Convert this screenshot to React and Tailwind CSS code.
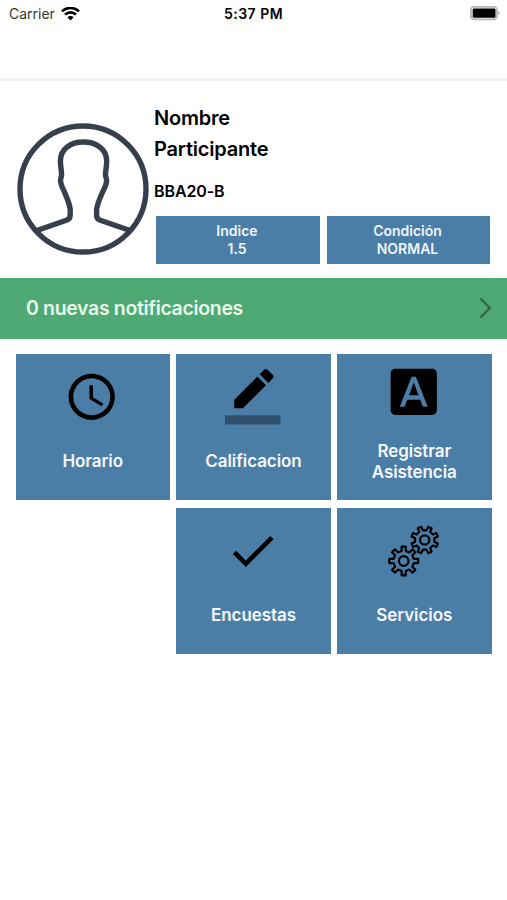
import React from "react";

function gearPath(cx, cy, outer, root, offset) {
  const teeth = 8;
  const step = 360 / teeth;
  const points = [];
  for (let i = 0; i < teeth; i++) {
    const mid = offset + i * step;
    [
      [-11.5, root],
      [-8, outer],
      [8, outer],
      [11.5, root],
    ].forEach(([delta, radius]) => {
      const a = ((mid + delta) * Math.PI) / 180;
      points.push(`${(cx + radius * Math.cos(a)).toFixed(2)} ${(cy + radius * Math.sin(a)).toFixed(2)}`);
    });
  }
  return `M${points.join("L")}Z`;
}

function StatusBar() {
  return (
    <div className="grid h-[28px] grid-cols-3 items-center pl-[9px] pr-[6px]">
      <div className="flex items-center gap-[6px]">
        <span className="text-[14px] leading-[18px] text-[#333]">Carrier</span>
        <svg className="h-[15px] w-[19px]" viewBox="0 0 19 15">
          <g fill="none" stroke="#000" strokeWidth="2.7">
            <path d="M1 4.4A12.2 12.2 0 0 1 18 4.4" />
            <path d="M4 7.6A7.9 7.9 0 0 1 15 7.6" />
          </g>
          <path d="M9.5 13.4L6.4 10.3A4.4 4.4 0 0 1 12.6 10.3Z" />
        </svg>
      </div>
      <span className="-ml-[3px] text-center text-[14px] font-semibold leading-[18px] tracking-[0.5px]">5:37 PM</span>
      <svg className="h-[16px] w-[32px] justify-self-end" viewBox="0 0 32 16">
        <rect x="1.9" y="0.8" width="26" height="12.6" rx="3.4" fill="#fff" stroke="#b5b5b5" strokeWidth="1.9" />
        <rect x="3.7" y="2.6" width="22.8" height="9.2" rx="1.4" />
        <path d="M29.4 4.7a2.6 2.6 0 0 1 0 4.6Z" fill="#aaa" />
      </svg>
    </div>
  );
}

function Avatar() {
  return (
    <svg className="h-[132px] w-[132px] shrink-0" viewBox="0 0 132 132" fill="none" stroke="#373f4d" strokeWidth="5.4">
      <circle cx="66" cy="66" r="63" />
      <path
        strokeLinejoin="round"
        d="M20 107.5L50 97Q53.2 95.8 53.2 92V86C52 79 49.5 74 47.5 69C45.5 65 44.3 63 43.6 59C43 56 44.7 54 44.6 51C44.4 47 43.4 43 43.4 38C43.4 25.5 54 19 66.3 19C78.6 19 89.7 25.5 89.7 38C89.7 43 88.7 47 88.5 51C88.4 54 90.1 56 89.5 59C88.8 63 87.6 65 85.6 69C83.5 74 81 79 79.6 86V92Q79.6 95.8 82.6 97L113 107.5"
      />
    </svg>
  );
}

function Stat({ label, value }) {
  return (
    <div className="flex h-[48px] flex-1 flex-col items-center justify-center bg-[#4b7ea7] pr-[1.5px] text-[14px] font-semibold leading-[18px] text-[#eef5fb]">
      <span>{label}</span>
      <span>{value}</span>
    </div>
  );
}

function Glyph({ children, className }) {
  return (
    <svg className={"mr-[1.4px] h-[55.5px] w-[55.5px] " + className} viewBox="0 0 24 24">
      {children}
    </svg>
  );
}

function Tile({ icon, children, column }) {
  return (
    <div className={"flex h-[146.5px] flex-col items-center bg-[#4b7ea7] " + (column || "")}>
      <div className="flex h-[87px] items-start justify-center">{icon}</div>
      <div className="flex h-[42px] items-center text-center text-[17px] font-semibold leading-[20.5px] tracking-[-0.08px] text-[#f5f9fd]">
        {children}
      </div>
    </div>
  );
}

export default function App() {
  return (
    <div className="h-[900px] w-[507px] overflow-hidden bg-white font-['Inter',sans-serif] text-black">
      <StatusBar />
      <div className="h-[52.5px] border-b-[3px] border-[#f0f0f0]" />

      <section className="flex h-[197px] pl-[17px] pr-[17px]">
        <div className="pt-[42.5px]">
          <Avatar />
        </div>
        <div className="flex-1 pl-[5px] pt-[22.5px]">
          <div className="text-[20px] font-semibold leading-[30.5px] tracking-[-0.2px]">
            Nombre
            <br />
            Participante
          </div>
          <div className="mt-[16px] text-[16px] font-semibold leading-[22px] tracking-[-0.1px]">BBA20-B</div>
          <div className="ml-[2px] mt-[13.5px] flex gap-[7px]">
            <Stat label="Indice" value="1.5" />
            <Stat label="Condición" value="NORMAL" />
          </div>
        </div>
      </section>

      <div className="flex h-[61px] items-center justify-between bg-[#4ea975] pl-[26px] pr-[15px]">
        <span className="text-[19.5px] font-semibold leading-[24px] tracking-[-0.34px] text-[#e9fbea]">
          0 nuevas notificaciones
        </span>
        <svg className="h-[22px] w-[14px]" viewBox="0 0 14 22" fill="none" stroke="#37664a" strokeWidth="2.5">
          <path d="M2.5 1.5L11.8 11L2.5 20.5" />
        </svg>
      </div>

      <main className="mx-[15.5px] mt-[15px] grid grid-cols-3 gap-x-[6.3px] gap-y-[7.5px]">
        <Tile
          icon={
            <Glyph className="mt-[15.5px]">
              <path d="M11.99 2C6.47 2 2 6.48 2 12s4.47 10 9.99 10C17.52 22 22 17.52 22 12S17.52 2 11.99 2zM12 20c-4.42 0-8-3.58-8-8s3.58-8 8-8 8 3.58 8 8-3.58 8-8 8zm.5-13H11v6l5.25 3.15.75-1.23-4.5-2.67z" />
            </Glyph>
          }
        >
          Horario
        </Tile>
        <Tile
          icon={
            <Glyph className="mt-[15.5px]">
              <path d="M17.75 7L14 3.25l-10 10V17h3.75l10-10zm2.96-2.96c.39-.39.39-1.02 0-1.41L18.37.29c-.39-.39-1.02-.39-1.41 0L15 2.25 18.75 6l1.96-1.96z" />
              <path d="M0 20h24v4H0z" fillOpacity=".36" />
            </Glyph>
          }
        >
          Calificacion
        </Tile>
        <Tile
          icon={
            <Glyph className="mt-[10.8px]">
              <path d="M9.93 13.5h4.14L12 7.98zM20 2H4c-1.1 0-2 .9-2 2v16c0 1.1.9 2 2 2h16c1.1 0 2-.9 2-2V4c0-1.1-.9-2-2-2zm-4.05 16.5l-1.14-3H9.17l-1.12 3H5.96l5.11-13h1.86l5.11 13h-2.09z" />
            </Glyph>
          }
        >
          <span>
            Registrar
            <br />
            Asistencia
          </span>
        </Tile>
        <Tile
          column="col-start-2"
          icon={
            <Glyph className="mt-[15.5px]">
              <path d="M9 16.17L4.83 12l-1.42 1.41L9 19 21 7l-1.41-1.41z" />
            </Glyph>
          }
        >
          Encuestas
        </Tile>
        <Tile
          icon={
            <svg className="mt-[16px] h-[55px] w-[55px]" viewBox="0 0 55 55" fill="none" stroke="#000" strokeWidth="2.2" strokeLinejoin="round">
              <path d={gearPath(37.7, 16, 13.6, 9.8, 22.5)} />
              <circle cx="37.7" cy="16" r="4.7" />
              <path d={gearPath(16.7, 37, 14.6, 10.3, 0)} fill="#4b7ea7" />
              <circle cx="16.7" cy="37" r="4.8" />
            </svg>
          }
        >
          Servicios
        </Tile>
      </main>
    </div>
  );
}
